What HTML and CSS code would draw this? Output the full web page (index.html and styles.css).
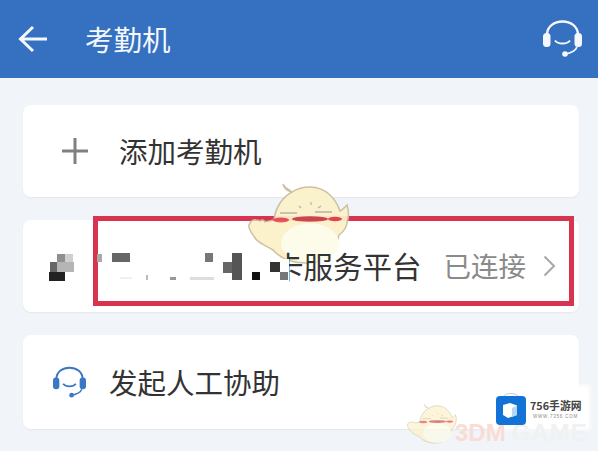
FILE: index.html
```html
<!DOCTYPE html>
<html lang="zh-CN">
<head>
  <meta charset="UTF-8" />
  <meta name="viewport" content="width=device-width, initial-scale=1.0"/>
  <title>考勤机</title>
  <link rel="stylesheet" href="styles.css">
</head>
<body>

<svg class="defs" width="0" height="0">
  <symbol id="headset" viewBox="0 0 39 38">
    <path d="M4 15 C4 -3 35 -3 35 15" fill="none" stroke="currentColor" stroke-width="2.4"/>
    <rect x="0" y="13" width="7.5" height="14" rx="3.5" fill="currentColor"/>
    <rect x="31.5" y="13" width="7.5" height="14" rx="3.5" fill="currentColor"/>
    <path d="M12 20.5 C15 24.5 24 24.5 27 20.5" fill="none" stroke="currentColor" stroke-width="2"/>
    <path d="M34 27 C32.5 31 28 33 22 34" fill="none" stroke="currentColor" stroke-width="1.8"/>
    <circle cx="22" cy="34" r="2.8" fill="currentColor"/>
  </symbol>
  <symbol id="mascot" viewBox="-2 0 102 82">
    <path d="M33 1 C34 4 38 6 42 9 C48 5 54 4 60 4 C76 4 86 16 90 28 C93 27 95 24 97 22 C99 28 99 34 97 40 C96 46 92 50 89 52 C86 68 74 80 56 80 C42 80 30 75 23 67 C15 62 8 60 5 55 C2 50 -2 46 -1 42 C0 38 4 36 6 37 C8 37 9 37 10 38 C12 36 14 37 15 39 L24 37 C25 26 32 14 42 9 C38 8 34 6 33 1 Z" fill="#fbf2c9" stroke="#c9bca0" stroke-width="1.5"/>
    <ellipse cx="60" cy="60" rx="29" ry="19.500" fill="#fdfbe8"/>
    <path d="M30 30 H47 M65 29 H82" stroke="#b5aca5" stroke-width="1.3"/>
    <path d="M49 23 L51 25 M61 19 V22 M71 23 L68 25" stroke="#b5aca5" stroke-width="1.2"/>
    <ellipse cx="31" cy="37" rx="8" ry="2.4" fill="#e8505a"/>
    <ellipse cx="60" cy="36" rx="18" ry="2.8" fill="#cc4650"/>
    <ellipse cx="85" cy="36" rx="7" ry="2.2" fill="#e4424f"/>
  </symbol>
</svg>

<div class="page">
  <header class="topbar">
    <svg class="back" width="30" height="28" viewBox="0 0 30 28">
      <path d="M15 2 L2.500 14 L15 26 M3 14 H29" fill="none" stroke="#f4f8fc" stroke-width="3"/>
    </svg>
    <h1 class="title">考勤机</h1>
    <svg class="support" width="39" height="38"><use href="#headset"/></svg>
  </header>

  <main class="list">
    <div class="card add">
      <svg class="plus" width="28" height="28" viewBox="0 0 28 28">
        <path d="M14 1 V27 M1 14 H27" stroke="#808080" stroke-width="3"/>
      </svg>
      <span class="label">添加考勤机</span>
    </div>

    <div class="card device">
      <span class="label name">卡服务平台</span>
      <span class="status">已连接</span>
      <svg class="chevron" width="13" height="22" viewBox="0 0 13 22">
        <path d="M1.500 1.500 L11 11 L1.500 20.500" fill="none" stroke="#a8a8a8" stroke-width="2"/>
      </svg>
      <!-- 打码 -->
      <svg class="mosaic" width="250" height="36" viewBox="48 250 250 36">
        <rect x="270" y="259" width="19" height="25" fill="#fff"/>
        <rect x="57" y="254" width="8" height="8" fill="#8f8f8f"/>
        <rect x="65" y="254" width="8" height="8" fill="#cfcfcf"/>
        <rect x="57" y="262" width="17" height="10" fill="#b5b5b5"/>
        <rect x="50" y="262" width="7" height="10" fill="#666"/>
        <rect x="49" y="272" width="16" height="9" fill="#222"/>
        <rect x="97" y="254" width="5" height="8" fill="#aaa"/>
        <rect x="112" y="253" width="18" height="9" fill="#666"/>
        <rect x="205" y="253" width="8" height="9" fill="#777"/>
        <rect x="232" y="253" width="10" height="27" fill="#555"/>
        <rect x="223" y="262" width="9" height="11" fill="#666"/>
        <rect x="252" y="272" width="8" height="8" fill="#111"/>
        <rect x="270" y="262" width="10" height="10" fill="#333"/>
        <rect x="280" y="272" width="8" height="8" fill="#777"/>
        <rect x="120" y="277" width="12" height="2" fill="#f0f0f0"/>
        <rect x="146" y="275" width="2" height="5" fill="#bbb"/>
        <rect x="170" y="277" width="6" height="3" fill="#999"/>
        <rect x="190" y="277" width="24" height="3" fill="#ddd"/>
      </svg>
    </div>

    <div class="card help">
      <svg class="help-icon" width="33" height="33"><use href="#headset"/></svg>
      <span class="label">发起人工协助</span>
    </div>
  </main>

  <div class="highlight"></div>
  <svg class="mascot big" width="102" height="82"><use href="#mascot"/></svg>

  <div class="watermark">
    <div class="wm-halo"></div>
    <svg class="mascot small" width="50" height="44"><use href="#mascot"/></svg>
    <span class="wm-3dm">3DM<em>GAME</em></span>
    <svg class="wm-logo" width="30" height="33" viewBox="0 0 30 33">
      <path d="M7 6 C7 0 23 0 23 6" fill="none" stroke="#c4ced8" stroke-width="1"/>
      <rect y="4" width="30" height="29" rx="4" fill="#1272d6"/>
      <path d="M14 11 L21 13.500 V23 L12 26 L7 23 V13 Z" fill="#fff"/>
      <path d="M16 16 L21 13.500 V23 L16 25 Z" fill="#b9d6f2"/>
    </svg>
    <div class="wm-text">
      <span class="wm-name">756手游网</span>
      <span class="wm-url">WWW.7356.COM</span>
    </div>
  </div>
</div>

</body>
</html>
```

FILE: styles.css
```css
body {
  margin: 0;
  font-family: "Noto Sans CJK SC", "Noto Sans", sans-serif;
  background: #f1f4f8;
  color: #333;
}
.defs {
  position: absolute;
}
.page {
  position: relative;
  width: 598px;
  height: 451px;
  overflow: hidden;
}
.topbar {
  display: flex;
  align-items: center;
  height: 78px;
  padding: 0 16px 0 18px;
  box-sizing: border-box;
  background: #3670c0;
  color: #f4f8fc;
}
.title {
  margin: 0 0 0 37px;
  font-size: 28.500px;
  font-weight: 400;
  line-height: 1;
}
.support {
  margin-left: auto;
}
.list {
  display: flex;
  flex-direction: column;
  gap: 23px;
  padding: 27px 19px 0 23px;
}
.card {
  position: relative;
  display: flex;
  align-items: center;
  height: 92px;
  background: #fff;
  border-radius: 8px;
  box-shadow: 0 1px 2px rgba(0,0,0,0.06);
}
.label {
  font-size: 28.500px;
  line-height: 1;
}
.add {
  padding-left: 38px;
}
.plus {
  margin-right: 30px;
}
.device {
  justify-content: flex-end;
  padding-right: 23px;
}
/* text stays above the mascot */
.name {
  position: relative;
  z-index: 2;
  font-size: 29.500px;
  white-space: nowrap;
}
.status {
  margin-left: 22px;
  font-size: 27.500px;
  line-height: 1;
  color: #8a8a8a;
}
.chevron {
  margin-left: 17px;
}
.mosaic {
  position: absolute;
  z-index: 2;
  left: 25px;
  top: 30px;
}
.help {
  height: 94px;
  padding-left: 30px;
}
.help-icon {
  margin-right: 23px;
  color: #3b78c4;
}
.highlight {
  position: absolute;
  left: 93px;
  top: 216px;
  width: 481px;
  height: 90px;
  box-sizing: border-box;
  border: 5px solid #d9344f;
}
.mascot {
  position: absolute;
}
.big {
  z-index: 1;
  left: 248px;
  top: 183px;
  opacity: 0.93;
}
.small {
  left: 407px;
  top: 402px;
  opacity: 0.7;
}
.wm-halo {
  position: absolute;
  left: 488px;
  top: 385px;
  width: 102px;
  height: 45px;
  background: #fff;
  filter: blur(2px);
}
.wm-3dm {
  position: absolute;
  left: 455px;
  top: 423px;
  font-family: "Liberation Sans", sans-serif;
  font-size: 24px;
  font-weight: 700;
  line-height: 0.85;
  color: #f9ddd5;
}
.wm-3dm em {
  margin-left: 6px;
  font-style: normal;
  letter-spacing: 1px;
  color: #f0f1f3;
}
.wm-logo {
  position: absolute;
  left: 496px;
  top: 392px;
}
.wm-text {
  position: absolute;
  left: 530px;
  top: 400px;
  display: flex;
  flex-direction: column;
  gap: 4px;
}
.wm-name {
  font-size: 10.800px;
  font-weight: 700;
  line-height: 1;
  color: #444;
}
.wm-url {
  margin-left: 3px;
  font-family: "Liberation Sans", sans-serif;
  font-size: 4.500px;
  line-height: 1;
  letter-spacing: 0.8px;
  color: #888;
}
```
